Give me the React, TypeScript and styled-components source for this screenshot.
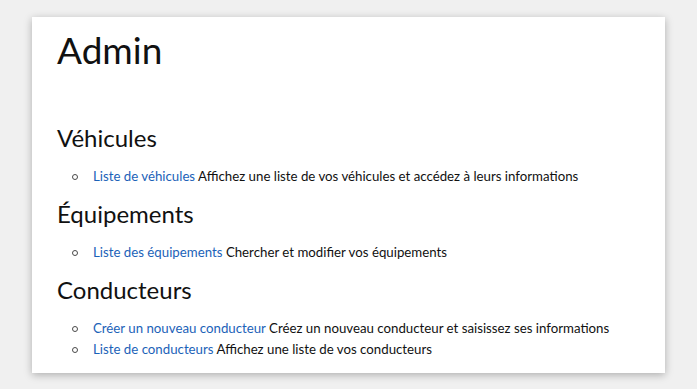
import styled, { createGlobalStyle } from 'styled-components';

const GlobalStyle = createGlobalStyle`
  body {
    margin: 0;
    background: #f0f0f0;
    font-family: Lato, 'Open Sans', sans-serif;
    color: #111;
  }
`;

const Page = styled.div`
  padding: 17px 32px;
`;

const Card = styled.main`
  width: 633px;
  box-sizing: border-box;
  background: #fff;
  box-shadow: 0 2px 8px rgba(0, 0, 0, 0.28);
  padding: 9px 25px 0;
`;

const Title = styled.h1`
  margin: 0 0 50px;
  font-size: 37px;
  line-height: 48px;
  font-weight: 400;
`;

const SectionTitle = styled.h2`
  margin: 0 0 14px;
  font-size: 24px;
  line-height: 28px;
  font-weight: 400;
`;

const List = styled.ul`
  margin: 0;
  padding: 0 0 13px 36px;
  list-style: none;
  font-size: 13.25px;
  line-height: 21px;
`;

const Item = styled.li`
  position: relative;

  &::before {
    content: '';
    position: absolute;
    left: -21px;
    top: 8px;
    width: 6px;
    height: 6px;
    box-sizing: border-box;
    border: 1.3px solid #4a4a4a;
    border-radius: 50%;
  }
`;

const Link = styled.a`
  color: #1b62b8;
  text-decoration: none;
`;

const sections = [
  {
    title: 'Véhicules',
    items: [
      ['Liste de véhicules', 'Affichez une liste de vos véhicules et accédez à leurs informations'],
    ],
  },
  {
    title: 'Équipements',
    items: [['Liste des équipements', 'Chercher et modifier vos équipements']],
  },
  {
    title: 'Conducteurs',
    items: [
      ['Créer un nouveau conducteur', 'Créez un nouveau conducteur et saisissez ses informations'],
      ['Liste de conducteurs', 'Affichez une liste de vos conducteurs'],
    ],
  },
];

export default function App() {
  return (
    <Page>
      <GlobalStyle />
      <Card>
        <Title>Admin</Title>
        {sections.map((s) => (
          <section key={s.title}>
            <SectionTitle>{s.title}</SectionTitle>
            <List>
              {s.items.map(([label, text]) => (
                <Item key={label}>
                  <Link href="#">{label}</Link> {text}
                </Item>
              ))}
            </List>
          </section>
        ))}
      </Card>
    </Page>
  );
}
